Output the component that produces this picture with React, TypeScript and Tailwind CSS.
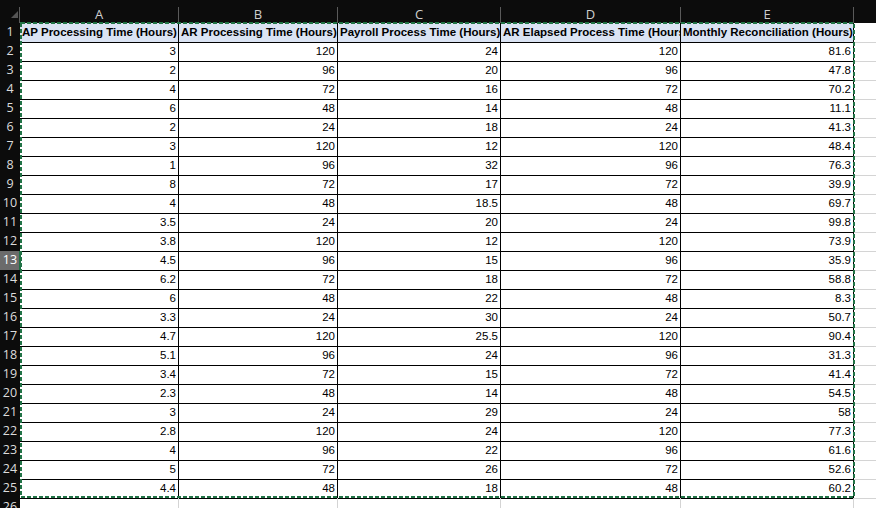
import React from "react";

const headers = [
  "AP Processing Time (Hours)",
  "AR Processing Time (Hours)",
  "Payroll Process Time (Hours)",
  "AR Elapsed Process Time (Hours)",
  "Monthly Reconciliation (Hours)",
];

const data: string[][] = [
  ["3", "120", "24", "120", "81.6"],
  ["2", "96", "20", "96", "47.8"],
  ["4", "72", "16", "72", "70.2"],
  ["6", "48", "14", "48", "11.1"],
  ["2", "24", "18", "24", "41.3"],
  ["3", "120", "12", "120", "48.4"],
  ["1", "96", "32", "96", "76.3"],
  ["8", "72", "17", "72", "39.9"],
  ["4", "48", "18.5", "48", "69.7"],
  ["3.5", "24", "20", "24", "99.8"],
  ["3.8", "120", "12", "120", "73.9"],
  ["4.5", "96", "15", "96", "35.9"],
  ["6.2", "72", "18", "72", "58.8"],
  ["6", "48", "22", "48", "8.3"],
  ["3.3", "24", "30", "24", "50.7"],
  ["4.7", "120", "25.5", "120", "90.4"],
  ["5.1", "96", "24", "96", "31.3"],
  ["3.4", "72", "15", "72", "41.4"],
  ["2.3", "48", "14", "48", "54.5"],
  ["3", "24", "29", "24", "58"],
  ["2.8", "120", "24", "120", "77.3"],
  ["4", "96", "22", "96", "61.6"],
  ["5", "72", "26", "72", "52.6"],
  ["4.4", "48", "18", "48", "60.2"],
];

const grid = "grid grid-cols-[20px_159px_159px_163px_180px_173px_1fr]";
const cellFont = { fontFamily: '"Liberation Sans", Arial, sans-serif' };
const uiFont = { fontFamily: '"Open Sans", "DejaVu Sans", sans-serif' };

function RowHeader({ n, active }: { n: number; active?: boolean }) {
  return (
    <div
      className={
        "h-full flex items-center justify-center text-[12.5px] border-b border-[#3a3a3a] " +
        (active ? "bg-[#6b6b6b] text-white" : "bg-[#0c0c0c] text-[#dcdcdc]")
      }
      style={uiFont}
    >
      {n}
    </div>
  );
}

export default function App() {
  return (
    <div className="relative w-[876px] h-[508px] overflow-hidden bg-white">
      {/* column header */}
      <div className={grid + " h-[23px] bg-[#0c0c0c]"}>
        <div className="relative pt-[7px]">
          <div className="h-full border-r border-[#5a5a5a]" />
          <svg className="absolute left-[11px] top-[11px]" width={7} height={7}>
            <polygon points="7,0 7,7 0,7" fill="#555" />
          </svg>
        </div>
        {["A", "B", "C", "D", "E", ""].map((l, i) => (
          <div key={i} className="pt-[7px]">
            <div
              className={
                "h-full flex items-center justify-center text-[13px] text-[#cfcfcf] leading-none pb-[1px] " +
                (i < 5 ? "border-r border-[#5a5a5a]" : "")
              }
              style={uiFont}
            >
              {l}
            </div>
          </div>
        ))}
      </div>

      {/* row 1 headers */}
      <div className={grid + " h-[19px]"}>
        <RowHeader n={1} />
        {headers.map((h, i) => (
          <div
            key={i}
            className="bg-[#dae3f3] border-r border-b border-black text-[11.5px] font-bold text-black pl-[2px] leading-[18px] whitespace-nowrap overflow-hidden"
            style={cellFont}
          >
            {h}
          </div>
        ))}
        <div className="border-b border-[#d4d4d4]" />
      </div>

      {data.map((r, ri) => (
        <div key={ri} className={grid + " h-[19px]"}>
          <RowHeader n={ri + 2} active={ri + 2 === 13} />
          {r.map((v, ci) => (
            <div
              key={ci}
              className="border-r border-b border-black text-[11.5px] text-black text-right pr-[2px] leading-[19px] whitespace-nowrap overflow-hidden"
              style={cellFont}
            >
              {v}
            </div>
          ))}
          <div className="border-b border-[#d4d4d4]" />
        </div>
      ))}

      {/* row 26 */}
      <div className={grid + " h-[19px]"}>
        <RowHeader n={26} />
        {[0, 1, 2, 3, 4].map((i) => (
          <div key={i} className="border-r border-[#d4d4d4]" />
        ))}
        <div />
      </div>

      {/* active row marker */}
      <div className="absolute left-[19px] top-[251px] w-[2px] h-[19px] bg-[#1e7145]" />

      {/* copy marquee */}
      <svg
        className="absolute left-[20px] top-[22px] pointer-events-none"
        width={835}
        height={476}
      >
        <rect
          x={1}
          y={1}
          width={833}
          height={474}
          fill="none"
          stroke="#217346"
          strokeWidth={2}
          strokeDasharray="4 2"
        />
      </svg>
    </div>
  );
}
